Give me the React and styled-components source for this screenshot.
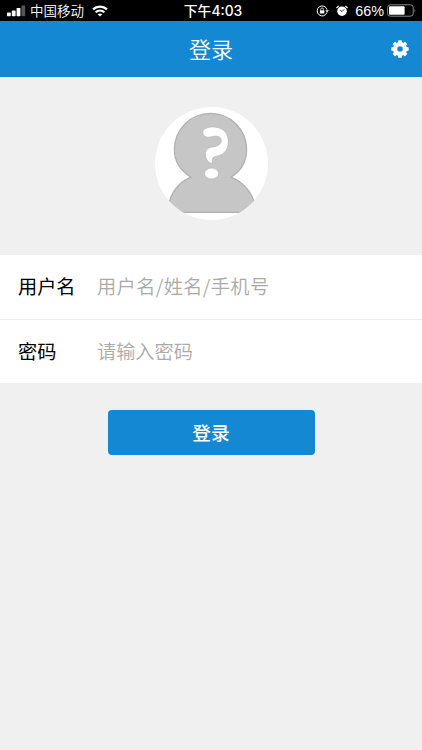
import React from 'react';
import styled, { createGlobalStyle } from 'styled-components';

const SignalIcon = () => (
    <svg width='19' height='12' viewBox='0 0 19 12'>
        <rect x='0' y='7.6' width='3.8' height='3.6' rx='.6' fill='#fff' />
        <rect x='4.8' y='5.4' width='3.8' height='5.8' rx='.6' fill='#fff' />
        <rect x='9.6' y='3' width='3.8' height='8.2' rx='.6' fill='#fff' />
        <rect x='14.4' y='.4' width='3.8' height='10.8' rx='.6' fill='#555' />
    </svg>
)

const WifiIcon = () => (
    <svg width='16' height='12' viewBox='0 0 16 12' fill='none' stroke='#fff' strokeWidth='2.2'>
        <path d='M1 4.4C5 .6 11 .6 15 4.4' />
        <path d='M3.6 7.3C6.2 5 9.8 5 12.4 7.3' />
        <path d='M8 11.6L5.7 9.3C7 8.1 9 8.1 10.3 9.3Z' fill='#fff' stroke='none' />
    </svg>
)

const LockIcon = () => (
    <svg width='13' height='12' viewBox='0 0 13 12' fill='none' stroke='#fff'>
        <path d='M10.9 7.6A5 5 0 1 1 11 4.6' />
        <path d='M9.4 5.2H12.8L11.1 7.6Z' fill='#fff' stroke='none' />
        <rect x='3.9' y='5.3' width='4.4' height='3.2' fill='#fff' stroke='none' />
        <path d='M4.7 5.4V4.4A1.4 1.4 0 0 1 7.5 4.4V5.4' strokeWidth='.8' />
    </svg>
)

const AlarmIcon = () => (
    <svg width='12' height='12' viewBox='0 0 12 12'>
        <circle cx='6' cy='6.2' r='4.8' fill='#fff' />
        <path d='M.5 3L2.7 .8M11.5 3L9.3 .8' stroke='#fff' strokeWidth='1.2' />
        <path d='M6 6.5L8.2 4.3M6 6.5L4.2 5.2' fill='none' stroke='#000' strokeWidth='.8' />
    </svg>
)

const BatteryIcon = () => (
    <svg width='30' height='13' viewBox='0 0 30 13'>
        <rect x='.6' y='.8' width='25.6' height='11.4' rx='2.8' fill='none' stroke='#888' />
        <rect x='2' y='2.2' width='15.6' height='8.6' rx='1' fill='#fff' />
        <path d='M27.6 4.6Q29.2 6.5 27.6 8.4Z' fill='#999' />
    </svg>
)

const teeth = [0, 45, 90, 135, 180, 225, 270, 315];

const GearIcon = () => (
    <svg width='18' height='18' viewBox='0 0 18 18'>
        <g fill='#fff'>
            {teeth.map(deg => (
                <path key={deg} d='M6.9 4L7.2 .8Q7.3 .3 7.9 .3H10.1Q10.7 .3 10.8 .8L11.1 4Z' transform={`rotate(${deg} 9 9)`} />
            ))}
        </g>
        <circle cx='9' cy='9' r='4.9' fill='none' stroke='#fff' strokeWidth='4.2' />
    </svg>
)

const Avatar = () => (
    <svg width='113' height='113' viewBox='0 0 113 113'>
        <defs>
            <clipPath id='round'>
                <circle cx='56.5' cy='56.5' r='56.5' />
            </clipPath>
        </defs>
        <g clipPath='url(#round)'>
            <rect width='113' height='113' fill='#fff' />
            <path
                d='M36 70.2C26 64 19.4 54 19.4 42.5A36.1 36.1 0 0 1 91.6 42.5C91.6 54 86 64 76 70.2C86 74 95 83 98.5 93L102 105.3H10L14.8 93C18 83 26 74 36 70.2Z'
                fill='#c6c6c6' stroke='#b0b0b0' strokeWidth='1.3'
            />
            <path
                d='M47.8 25.6C47.6 21.6 53 19.8 58.5 20C68.5 20.4 73.5 26.5 73.3 35C73.1 43.5 68.5 48 61.5 49.2C56.8 50 57.2 52.5 57.2 56.6C53.5 56 50.4 52 50.4 47.3C50.4 42 53.5 40.6 59 39.8C64 39 66.5 36.3 66.3 33C66 29.2 61.5 28.4 57.5 29.6C52.5 31 48 30 47.8 25.6Z'
                fill='#fff' stroke='#b4b4b4' strokeWidth='.6'
            />
            <ellipse cx='56.5' cy='66.5' rx='7' ry='5.4' fill='#fff' stroke='#b4b4b4' strokeWidth='.6' />
        </g>
    </svg>
)

const App = () => {
    return (
        <Page>
            <GlobalStyle />
            <StatusBar>
                <Carrier>
                    <SignalIcon />
                    <span>中国移动</span>
                    <WifiIcon />
                </Carrier>
                <Time>下午4:03</Time>
                <Indicators>
                    <LockIcon />
                    <AlarmIcon />
                    <span>66%</span>
                    <BatteryIcon />
                </Indicators>
            </StatusBar>

            <Navbar>
                <Title>登录</Title>
                <SettingsButton aria-label='设置'><GearIcon /></SettingsButton>
            </Navbar>

            <AvatarBox><Avatar /></AvatarBox>

            <Form>
                <Field>
                    <Label htmlFor='username'>用户名</Label>
                    <Input id='username' placeholder='用户名/姓名/手机号' $spacing='.4px' />
                </Field>
                <Field>
                    <Label htmlFor='password'>密码</Label>
                    <Input id='password' type='password' placeholder='请输入密码' />
                </Field>
            </Form>

            <LoginButton>登录</LoginButton>
        </Page>
    )
}

const GlobalStyle = createGlobalStyle`
    * {
        box-sizing: border-box;
    }

    body {
        margin: 0;
        background: #f0f0f0;
    }

    body, input, button {
        font-family: 'Noto Sans CJK SC', sans-serif;
    }

    svg {
        display: block;
        flex-shrink: 0;
    }
`

const Page = styled.div`
    display: flex;
    flex-direction: column;
    align-items: center;
    width: 100%;
    height: 750px;
    background: #f0f0f0;
    overflow: hidden;
`

const StatusBar = styled.div`
    display: grid;
    grid-template-columns: 1fr auto 1fr;
    align-items: center;
    width: 100%;
    height: 21px;
    padding: 0 4px 0 7px;
    background: #000;
    color: #fff;
    font-size: 13.5px;
    line-height: 20px;
    white-space: nowrap;
`

const Carrier = styled.div`
    display: flex;
    align-items: center;

    span {
        margin: 0 8px 0 4px;
        padding-bottom: 2px;
        line-height: 18px;
        font-weight: 350;
    }
`

const Time = styled.div`
    padding-left: 1px;
    font-family: Inter, 'Noto Sans CJK SC', sans-serif;
    font-size: 13.8px;
    font-weight: 500;
`

const Indicators = styled.div`
    display: flex;
    align-items: center;
    justify-content: flex-end;
    gap: 7px;
    margin-right: 1px;
    font-family: 'Liberation Sans', sans-serif;
    font-size: 14.4px;

    span {
        margin-right: -4px;
    }
`

const Navbar = styled.header`
    display: grid;
    grid-template-columns: 1fr auto 1fr;
    align-items: center;
    width: 100%;
    height: 56px;
    padding: 0 13px;
    background: #1588d4;
`

const Title = styled.h1`
    grid-column: 2;
    margin: 0;
    padding-bottom: 2px;
    color: #fff;
    font-size: 22px;
    font-weight: 350;
    line-height: 32px;
`

const SettingsButton = styled.button`
    justify-self: end;
    padding: 0;
    border: none;
    background: none;
`

const AvatarBox = styled.div`
    display: flex;
    justify-content: center;
    width: 100%;
    height: 178px;
    padding-top: 30px;
`

const Form = styled.div`
    width: 100%;
    background: white;
`

const Field = styled.div`
    display: flex;
    align-items: center;
    height: 64px;
    padding: 0 0 2px 18px;

    & + & {
        border-top: 1px solid #ebebeb;
    }
`

const Label = styled.label`
    width: 79px;
    color: black;
    font-size: 19.2px;
    line-height: 28px;
`

const Input = styled.input`
    flex: 1;
    min-width: 0;
    height: 28px;
    padding: 0;
    border: none;
    outline: none;
    background: none;
    font-size: 19.2px;
    font-weight: 350;
    letter-spacing: ${props => props.$spacing || 'normal'};

    &::placeholder {
        color: #aaa;
    }
`

const LoginButton = styled.button`
    width: 207px;
    height: 45px;
    margin-top: 27px;
    padding: 0 0 2px;
    border: none;
    border-radius: 4px;
    background: #1588d4;
    color: white;
    font-size: 18.7px;
    font-weight: 500;
`

export default App;
